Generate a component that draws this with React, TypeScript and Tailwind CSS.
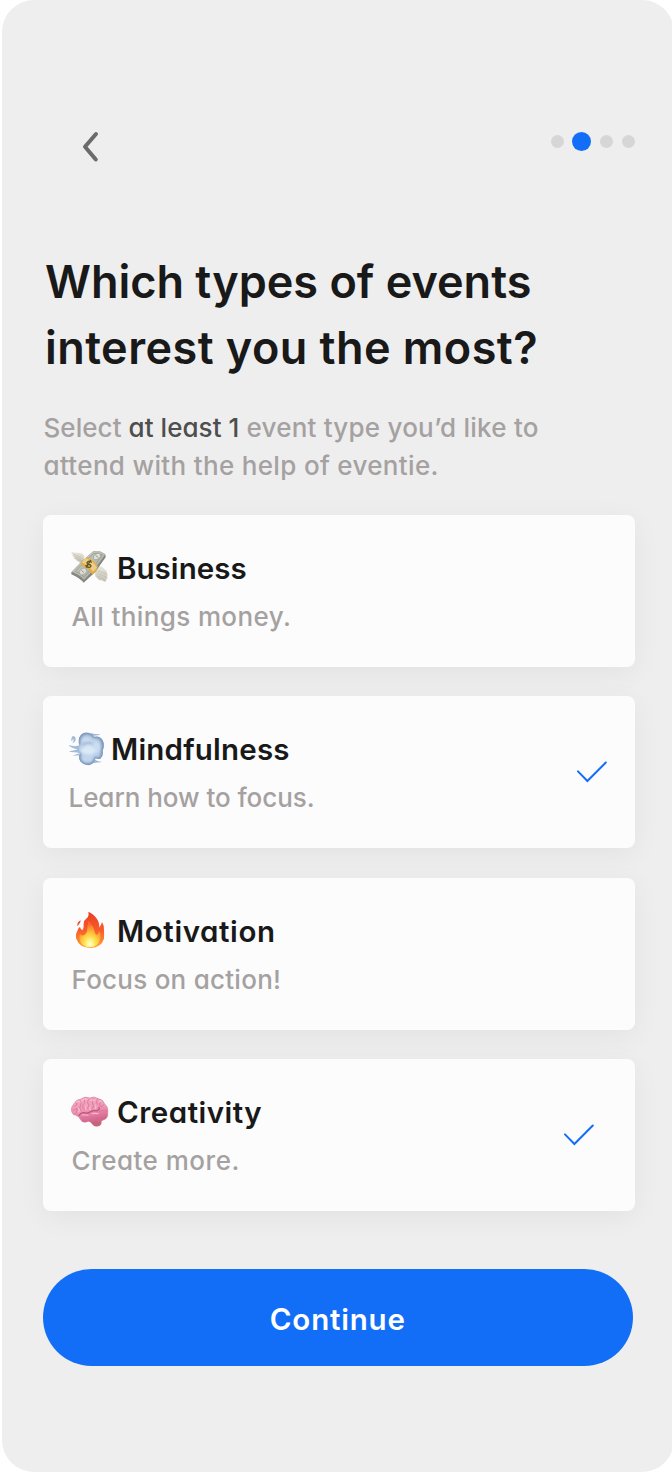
import type { ReactNode } from "react";

function MoneyIcon() {
  return (
    <svg viewBox="33 25.5 114 114" className="size-[38px] shrink-0" aria-hidden="true">
      <defs>
        <linearGradient id="wing" x1="0" y1="0" x2="0" y2="1">
          <stop offset="0" stopColor="#e9e7dd" />
          <stop offset="1" stopColor="#c5c3b4" />
        </linearGradient>
        <linearGradient id="bill" x1="0" y1="0" x2="1" y2="1">
          <stop offset="0" stopColor="#cfd0c8" />
          <stop offset="1" stopColor="#a5a89d" />
        </linearGradient>
      </defs>
      <path d="M34 37 Q42 40 52 40 Q67 39 73 49 L72 61 L64 69 Q57 70 56 66 Q49 66 49 60 Q41 60 43 54 Q36 51 38 46 Q34 43 34 37Z" fill="url(#wing)" />
      <path d="M40 44 L64 54 M44 52 L64 59 M50 60 L65 63" stroke="#b5b3a5" strokeWidth="1.5" fill="none" />
      <path d="M112 82 Q121 78 129 84 L135 91 Q142 94 141 101 Q146 106 141 110 Q145 117 139 119 Q140 126 134 127 Q126 121 118 122 L106 111 Q103 92 112 82Z" fill="url(#wing)" />
      <path d="M112 94 L140 103 M112 102 L139 112 M112 109 L135 122" stroke="#b5b3a5" strokeWidth="1.5" fill="none" />
      <path d="M34 98 L64 67 L99 36 Q116 30 136 44 L137 53 L105 98 L71 130 Q60 115 34 104Z" fill="#85877f" />
      <path d="M35 97 L66 66 L99 36 Q118 30 136 44 L105 87 L72 121 Q59 106 35 97Z" fill="url(#bill)" />
      <path d="M45 96 L69 72 L100 43 Q116 38 127 46 L101 82 L72 112 Q61 101 45 96Z" fill="none" stroke="#90948a" strokeWidth="2" />
      <ellipse cx="111" cy="51" rx="12" ry="8" fill="#dcded5" stroke="#9a9e94" strokeWidth="2" transform="rotate(-30 111 51)" />
      <ellipse cx="69" cy="96" rx="12" ry="9" fill="#dcded5" stroke="#9a9e94" strokeWidth="2" transform="rotate(-35 69 96)" />
      <path d="M107 48 L115 54 M64 93 L72 99" stroke="#9a9e94" strokeWidth="3" />
      <path d="M78 55 Q99 60 112 83 L109 95 L98 106 Q84 84 63 76 L64 69Z" fill="#ddad42" />
      <path d="M78 55 Q99 60 112 83 L98 98 Q84 78 64 70Z" fill="#e9cf8c" />
      <path d="M64 70 Q84 78 98 98 M78 55 Q99 60 112 83" stroke="#e8b03e" strokeWidth="4" fill="none" />
      <path d="M94 68 Q88 62 82 68 Q79 73 86 75 Q95 76 92 82 Q86 87 78 78 M92 63 L79 83" fill="none" stroke="#675321" strokeWidth="4" strokeLinecap="round" />
    </svg>
  );
}

function WindIcon() {
  return (
    <svg viewBox="24 29 114 114" className="size-[38px] shrink-0" aria-hidden="true">
      <defs>
        <radialGradient id="puff" cx="0.45" cy="0.5" r="0.6">
          <stop offset="0" stopColor="#d9e8f7" />
          <stop offset="0.55" stopColor="#b9cee6" />
          <stop offset="1" stopColor="#829dc0" />
        </radialGradient>
        <filter id="soften" x="-20%" y="-20%" width="140%" height="140%">
          <feGaussianBlur stdDeviation="3.5" />
        </filter>
        <clipPath id="puffShape">
          <path d="M57 76 Q53 57 63 46 Q75 35 90 42 Q99 46 102 52 Q121 49 128 63 Q135 78 128 94 Q131 110 121 118 Q114 121 107 117 Q104 132 89 137 Q73 140 61 126 Q53 114 61 101 Q52 90 57 76Z" />
        </clipPath>
      </defs>
      <path d="M90 41 Q105 45 119 45 L119 47 L96 50Z M98 118 Q110 125 127 128 L94 132Z" fill="#a3b7d0" />
      <path d="M27 78 Q45 83 62 78 L67 104 Q50 97 29 98 L29 96 Q44 91 53 91 Q39 87 27 80Z" fill="#a3bbd8" />
      <path d="M37 110 Q50 103 62 101 L62 109 Q48 107 37 110Z" fill="#b0c3da" />
      <g clipPath="url(#puffShape)">
        <rect x="50" y="36" width="85" height="104" fill="url(#puff)" />
        <g filter="url(#soften)">
          <path d="M57 76 Q53 57 63 46 Q75 35 90 42 Q99 46 102 52 Q121 49 128 63 Q135 78 128 94 Q131 110 121 118 Q114 121 107 117 Q104 132 89 137 Q73 140 61 126 Q53 114 61 101" fill="none" stroke="#7391b9" strokeWidth="8" />
          <ellipse cx="78" cy="62" rx="11" ry="8" fill="#c9dbee" />
          <ellipse cx="80" cy="119" rx="14" ry="9" fill="#c2d5eb" />
          <ellipse cx="111" cy="83" rx="9" ry="17" fill="#cbdef1" />
          <ellipse cx="84" cy="94" rx="22" ry="10" fill="#dbe9f7" />
          <path d="M68 76 Q83 65 98 75" fill="none" stroke="#93accb" strokeWidth="5" />
        </g>
      </g>
      <path d="M34 65 Q33 53 39 50 Q47 51 47 59 Q47 68 37 72 Q43 65 40 59 Q38 57 37 64Z" fill="#a3bad6" />
    </svg>
  );
}

function FireIcon() {
  return (
    <svg viewBox="33 33 114 114" className="size-[38px] shrink-0" aria-hidden="true">
      <defs>
        <linearGradient id="flame" x1="0" y1="0" x2="0" y2="1">
          <stop offset="0" stopColor="#e93c23" />
          <stop offset="0.5" stopColor="#f95a2b" />
          <stop offset="1" stopColor="#fba833" />
        </linearGradient>
        <radialGradient id="core" cx="0.5" cy="0.88" r="0.75">
          <stop offset="0" stopColor="#fffde8" />
          <stop offset="0.25" stopColor="#fff06a" />
          <stop offset="0.55" stopColor="#ffc63c" />
          <stop offset="1" stopColor="#fa6f2d" />
        </radialGradient>
        <filter id="glow" x="-20%" y="-20%" width="140%" height="140%">
          <feGaussianBlur stdDeviation="2" />
        </filter>
        <clipPath id="flameShape">
          <path d="M85 35 Q103 43 111 57 Q120 71 117 83 Q124 76 126 66 Q134 79 132 91 Q134 104 132 116 Q124 142 92 144 Q58 143 49 117 Q45 104 53 91 Q55 82 60 81 Q62 89 67 91 Q72 84 71 72 Q72 60 80 55 Q88 48 85 35Z" />
        </clipPath>
      </defs>
      <path d="M52 77 Q51 66 62 61 Q62 65 59 70 Q57 74 53 78Z" fill="#ef4f2b" />
      <g clipPath="url(#flameShape)">
        <rect x="45" y="33" width="90" height="113" fill="url(#flame)" />
        <path d="M84 63 Q102 76 104 96 Q105 103 111 105 Q116 100 118 92 Q124 104 120 119 Q115 141 90 142 Q63 140 59 119 Q56 108 60 102 Q64 109 73 105 Q83 97 82 80 Q86 72 84 63Z" fill="url(#core)" filter="url(#glow)" />
      </g>
    </svg>
  );
}

function BrainIcon() {
  return (
    <svg viewBox="33 21 114 114" className="size-[38px] shrink-0" aria-hidden="true">
      <defs>
        <linearGradient id="cortex" x1="0" y1="0" x2="0.3" y2="1">
          <stop offset="0" stopColor="#f5b0c6" />
          <stop offset="0.6" stopColor="#ef94b4" />
          <stop offset="1" stopColor="#d5668f" />
        </linearGradient>
      </defs>
      <path d="M88 108 Q97 105 105 104 L124 105 Q128 120 115 124 Q105 127 98 119Z" fill="#c66579" />
      <path d="M37 84 Q29 71 42 56 Q48 43 63 42 Q74 32 89 39 Q102 32 115 41 Q130 43 134 57 Q146 67 143 84 Q145 100 130 105 Q121 112 109 107 Q98 113 85 109 Q68 116 62 104 Q57 93 46 90 Q40 91 37 84Z" fill="url(#cortex)" stroke="#cf6c90" strokeWidth="1.5" />
      <g fill="none" strokeLinecap="round" strokeLinejoin="round">
        <path d="M44 64 Q52 62 51 55 M39 75 Q47 76 51 69 Q53 78 47 86 M60 46 Q67 53 61 63 Q56 68 62 75 M73 42 Q77 53 69 59 Q65 68 73 73 M87 42 Q80 49 84 57 Q90 60 82 70 M99 41 Q92 50 99 58 Q104 62 97 70 M113 42 Q105 49 112 58 M127 51 Q116 53 120 63 Q127 67 131 60 M66 99 Q79 96 88 99 Q98 94 105 96 Q117 91 124 95 Q131 97 138 90 M118 79 Q130 74 140 78" stroke="#d57598" strokeWidth="2.5" />
        <path d="M57 91 Q64 82 73 83 Q82 87 91 80 Q101 75 110 78 Q121 72 117 67" stroke="#bd4f7a" strokeWidth="3.5" />
        <path d="M51 50 Q58 46 60 52 M66 46 Q73 39 78 44 M92 47 Q100 42 105 47 M118 48 Q126 48 127 54 M56 70 Q60 77 55 81 M78 62 Q76 70 78 75 M90 65 Q88 72 91 75 M106 60 Q110 66 105 71 M67 90 Q78 88 84 91 M97 86 Q108 84 114 86" stroke="#fac4d4" strokeWidth="3.5" opacity=".8" />
      </g>
    </svg>
  );
}

function Check() {
  return (
    <svg viewBox="0 0 30 22" className="h-[22px] w-[30px] shrink-0" fill="none" stroke="#126ef6" strokeWidth="2" strokeLinecap="round" aria-hidden="true">
      <path d="M1 10.4 L10.4 20 L28.8 1.5" />
    </svg>
  );
}

interface EventCardProps {
  icon: ReactNode;
  title: string;
  description: string;
  titleClass: string;
  descriptionClass: string;
  paddingClass: string;
  selected?: boolean;
}

function EventCard({ icon, title, description, titleClass, descriptionClass, paddingClass, selected }: EventCardProps) {
  return (
    <button
      type="button"
      aria-pressed={!!selected}
      className={`flex h-[152px] w-full items-center justify-between rounded-lg bg-[#fcfcfc] text-left shadow-[0_6px_28px_rgba(0,0,0,0.05)] ${paddingClass}`}
    >
      <span className="flex flex-col gap-3 pt-[2px]">
        <span className="flex h-[38px] items-center gap-2">
          {icon}
          <span className={`pt-[2px] text-[29.5px] leading-[38px] font-semibold whitespace-nowrap text-[#19191a] ${titleClass}`}>{title}</span>
        </span>
        <span className={`pl-[0.5px] text-[26px] leading-[38px] font-medium whitespace-nowrap text-[#a5a1a1] ${descriptionClass}`}>
          {description}
        </span>
      </span>
      {selected && <Check />}
    </button>
  );
}

export default function App() {
  return (
    <div className="h-[1472px] w-[672px] overflow-hidden bg-white font-['Inter','Liberation_Sans',sans-serif] [font-feature-settings:'cv11']">
      <main className="ml-[2px] flex h-[1472px] w-[672px] flex-col rounded-[32px] bg-[#eeeeee] pt-[131px] pl-[41px]">
        <header className="flex h-[32px] w-[592px] items-start justify-between pl-[39px]">
          <button type="button" aria-label="Back">
            <svg viewBox="0 0 18 32" className="h-8 w-[18px]" fill="none" stroke="#6b6b6b" strokeWidth="4" strokeLinecap="round" strokeLinejoin="round">
              <path d="M14 3 L3 15.7 L13.8 28.5" />
            </svg>
          </button>
          <div className="flex h-[21px] items-center gap-[9px]">
            <span className="-mr-px size-[13px] rounded-full bg-[#d7d5d6]" />
            <span className="size-[19px] rounded-full bg-[#126ef6]" />
            <span className="size-[13px] rounded-full bg-[#d7d5d6]" />
            <span className="size-[13px] rounded-full bg-[#d7d5d6]" />
          </div>
        </header>

        <h1 className="mt-[86px] pl-[2px] text-[45px] leading-[65.5px] font-semibold whitespace-nowrap text-[#19191a]">
          <span className="block">Which types of events</span>
          <span className="block tracking-[0.45px]">interest you the most?</span>
        </h1>

        <p className="mt-[29px] pl-[0.5px] text-[26px] leading-[38px] font-medium whitespace-nowrap text-[#a5a1a1]">
          <span className="block tracking-[0.22px]">
            <span className="tracking-[0.05px]">
              Select <span className="text-[#4e4e4e]">at least 1</span>
            </span>{" "}
            event type you’d like to
          </span>
          <span className="block tracking-[0.33px]">attend with the help of eventie.</span>
        </p>

        <section className="mt-[30px] flex w-[592px] flex-col gap-[29.3px]">
          <EventCard icon={<MoneyIcon />} title="Business" description="All things money." titleClass="tracking-[0.05px]" descriptionClass="tracking-[0.38px]" paddingClass="pl-7 pr-7" />
          <EventCard icon={<WindIcon />} title="Mindfulness" description="Learn how to focus." titleClass="-ml-[3px] tracking-[0.2px]" descriptionClass="tracking-[-0.05px]" paddingClass="pl-[25px] pr-7" selected />
          <EventCard icon={<FireIcon />} title="Motivation" description="Focus on action!" titleClass="tracking-[0.6px]" descriptionClass="tracking-[0.25px]" paddingClass="pl-7 pr-7" />
          <EventCard icon={<BrainIcon />} title="Creativity" description="Create more." titleClass="tracking-[0.5px]" descriptionClass="tracking-[0.5px]" paddingClass="pl-7 pr-[41px]" selected />
        </section>

        <button type="button" className="mt-[58px] flex h-[97.5px] w-[589.5px] shrink-0 items-center justify-center rounded-full bg-[#126ef6] pt-[2px] text-[29.5px] font-semibold tracking-[0.8px] text-white">
          Continue
        </button>
      </main>
    </div>
  );
}
